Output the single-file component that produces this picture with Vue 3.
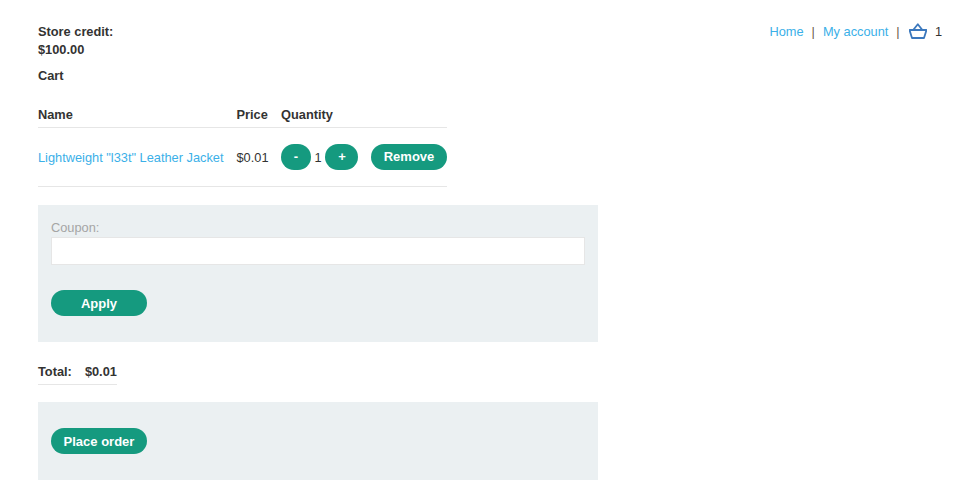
<template>
  <div class="page">
    <header class="top">
      <div class="credit">
        <strong class="credit-text">Store credit:<br />$100.00</strong>
        <strong class="cart-title">Cart</strong>
      </div>
      <nav class="nav">
        <a class="link">Home</a>
        <span class="sep first">|</span>
        <a class="link">My account</a>
        <span class="sep">|</span>
        <svg class="basket" width="18" height="16" viewBox="0 0 18 16" fill="none" stroke="#3b78bd" stroke-width="1.8">
          <path d="M0.5 7H17.5L15 15H3Z" stroke-linejoin="round" />
          <path d="M4.2 7L8.8 1.2L13.4 7" stroke-linejoin="round" />
        </svg>
        <span class="count">1</span>
      </nav>
    </header>

    <div class="table">
      <div class="row head">
        <span class="c-name">Name</span>
        <span class="c-price">Price</span>
        <span class="c-qty">Quantity</span>
      </div>
      <div class="row item">
        <a class="link c-name">Lightweight "l33t" Leather Jacket</a>
        <span class="c-price">$0.01</span>
        <div class="c-qty qty">
          <button class="btn small minus">-</button>
          <span class="num">1</span>
          <button class="btn small plus">+</button>
          <button class="btn remove">Remove</button>
        </div>
      </div>
    </div>

    <section class="panel coupon">
      <label class="coupon-label" for="coupon">Coupon:</label>
      <input id="coupon" class="coupon-input" type="text" />
      <button class="btn wide">Apply</button>
    </section>

    <div class="total"><span>Total:</span><span>$0.01</span></div>

    <section class="panel order">
      <button class="btn wide">Place order</button>
    </section>
  </div>
</template>

<script setup>
</script>

<style>
html, body { margin: 0; background: #fff; }
</style>

<style scoped>
.page {
  box-sizing: border-box;
  width: 980px;
  height: 496px;
  padding: 23px 38px 0;
  font-family: "Liberation Sans", Arial, sans-serif;
  font-size: 12.8px;
  line-height: 15px;
  color: #333332;
  overflow: hidden;
}
.top { display: flex; justify-content: space-between; align-items: flex-start; }
.credit { display: flex; flex-direction: column; }
.credit-text { line-height: 18px; font-weight: 700; }
.cart-title { margin-top: 9px; line-height: 16px; font-weight: 700; }
.nav { display: flex; align-items: center; height: 16px; color: #333332; }
.link { color: #3bb0e8; text-decoration: none; }
.sep { margin: 0 8px; color: #6b5a4a; }
.basket { margin-left: 1.2px; margin-right: 8px; }
.count { color: #333332; }

.table { width: 409px; margin-top: 16px; }
.row { display: flex; }
.c-name { width: 198.5px; flex: none; }
.c-price { width: 44.5px; flex: none; }
.c-qty { flex: 1; }
.head {
  height: 28px;
  padding-top: 7px;
  box-sizing: border-box;
  font-weight: 700;
  border-bottom: 1px solid #e6e6e6;
}
.item {
  height: 59px;
  box-sizing: border-box;
  align-items: center;
  border-bottom: 1px solid #e6e6e6;
}
.qty { display: flex; align-items: center; }
.btn {
  border: 0;
  background: #159a7f;
  color: #fff;
  font-family: inherit;
  font-size: 13px;
  font-weight: 700;
  height: 26px;
  padding: 0;
  border-radius: 13px;
  line-height: 26px;
}
.small { width: 30px; }
.plus { width: 33px; padding-left: 1px; }
.num { width: 14px; text-align: center; }
.remove { width: 76px; margin-left: 13px; }
.wide { width: 96px; display: block; padding-top: 1px; }

.panel { width: 560px; background: #ebf0f2; box-sizing: border-box; padding: 0 13px; }
.coupon { margin-top: 18px; height: 137px; padding-top: 15px; }
.coupon-label { display: block; color: #a5a5a5; height: 17px; line-height: 15px; }
.coupon-input {
  display: block;
  box-sizing: border-box;
  width: 534px;
  height: 28px;
  margin: 0 0 25px;
  padding: 0 6px;
  background: #fff;
  border: 1px solid #e6e6e6;
  outline: 0;
}
.total {
  display: flex;
  gap: 13px;
  width: max-content;
  margin-top: 21px;
  height: 21px;
  font-weight: 700;
  border-bottom: 1px solid #e6e6e6;
  line-height: 17px;
}
.order { margin-top: 17px; height: 78px; padding-top: 26px; }
</style>
